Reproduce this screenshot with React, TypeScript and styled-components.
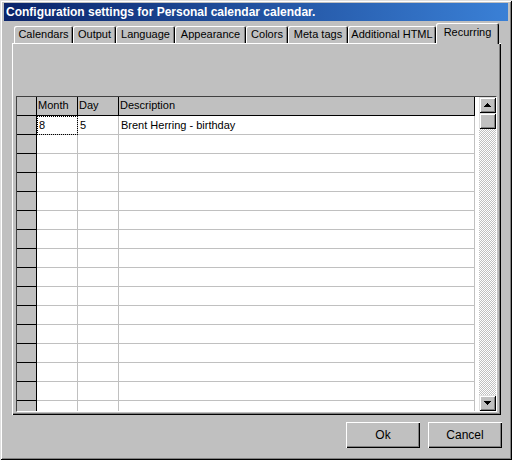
import React from 'react';
import styled, { createGlobalStyle } from 'styled-components';

const GlobalStyle = createGlobalStyle`
  * { box-sizing: border-box; }
  body {
    margin: 0;
    background: #c0c0c0;
    font-family: 'Liberation Sans', Arial, sans-serif;
    font-size: 11px;
    color: #000;
  }
`;

const Window = styled.div`
  width: 512px;
  height: 460px;
  padding: 3px 4px 0 4px;
  background: #c0c0c0;
  box-shadow: inset 1px 1px #dfdfdf, inset -1px -1px #000, inset 2px 2px #fff,
    inset -2px -2px #808080;
  display: flex;
  flex-direction: column;
`;

const TitleBar = styled.div`
  height: 18px;
  padding-left: 2px;
  display: flex;
  align-items: center;
  background: linear-gradient(to right, #0a246a, #3a80d6);
  color: #fff;
  font-weight: bold;
  font-size: 12px;
`;

const TabRow = styled.div`
  margin: 2px 0 0 10px;
  height: 20px;
  display: flex;
  align-items: flex-end;
`;

const Tab = styled.div<{ $width: number; $active?: boolean }>`
  position: relative;
  width: ${(p) => p.$width}px;
  height: ${(p) => (p.$active ? 21 : 17)}px;
  margin-bottom: ${(p) => (p.$active ? -1 : 0)}px;
  z-index: ${(p) => (p.$active ? 1 : 0)};
  padding-bottom: ${(p) => (p.$active ? 3 : 1)}px;
  display: flex;
  align-items: center;
  justify-content: center;
  background: #c0c0c0;
  border-radius: 2px 2px 0 0;
  box-shadow: inset 1px 1px #fff, inset -1px 0 #000, inset -2px 0 #808080;
  white-space: nowrap;
`;

const Panel = styled.div`
  width: 489px;
  height: 372px;
  margin-left: 8px;
  padding: 53px 0 0 4px;
  background: #c0c0c0;
  box-shadow: inset 1px 1px #fff, inset -1px -1px #000, inset -2px -2px #808080;
`;

const Grid = styled.div`
  width: 481px;
  height: 316px;
  display: flex;
  background: #fff;
  border-top: 1px solid #404040;
  border-left: 1px solid #404040;
  border-right: 1px solid #fff;
  border-bottom: 1px solid #fff;
`;

const Table = styled.div`
  flex: 1;
  overflow: hidden;
  display: flex;
  flex-direction: column;
`;

const Row = styled.div`
  height: 19px;
  flex: none;
  display: flex;
`;

const RowHead = styled.div`
  width: 20px;
  flex: none;
  background: #c0c0c0;
  border-right: 1px solid #000;
  border-bottom: 1px solid #000;
`;

const HeadCell = styled.div<{ $width: number }>`
  width: ${(p) => p.$width}px;
  flex: none;
  padding: 2px 0 0 1px;
  background: #c0c0c0;
  border-right: 1px solid #000;
  border-bottom: 1px solid #000;
  white-space: nowrap;
`;

const DataCell = styled.div<{ $width: number; $focus?: boolean }>`
  width: ${(p) => p.$width}px;
  flex: none;
  padding: 3px 0 0 2px;
  background: #fff;
  border-right: 1px solid #c0c0c0;
  border-bottom: 1px solid #c0c0c0;
  white-space: nowrap;
  outline: ${(p) => (p.$focus ? '1px dotted #000' : 'none')};
  outline-offset: -1px;
`;

const ScrollBar = styled.div`
  width: 17px;
  flex: none;
  display: flex;
  flex-direction: column;
  background: repeating-conic-gradient(#c0c0c0 0% 25%, #fff 0% 50%) 0 0 / 2px 2px;
`;

const ScrollPart = styled.div`
  height: 16px;
  flex: none;
  display: flex;
  align-items: center;
  justify-content: center;
  background: #c0c0c0;
  box-shadow: inset 1px 1px #dfdfdf, inset -1px -1px #000, inset 2px 2px #fff,
    inset -2px -2px #808080;
`;

const Track = styled.div`
  flex: 1;
`;

const Footer = styled.div`
  margin: 7px 6px 0 0;
  display: flex;
  justify-content: flex-end;
  gap: 8px;
`;

const Button = styled.button`
  width: 74px;
  height: 26px;
  padding: 0;
  border: none;
  background: #c0c0c0;
  font-family: 'Liberation Sans', Arial, sans-serif;
  font-size: 12px;
  color: #000;
  box-shadow: inset 1px 1px #fff, inset -1px -1px #000, inset -2px -2px #808080;
`;

const Arrow = ({ down }: { down?: boolean }) => (
  <svg width="7" height="4" viewBox="0 0 7 4" shapeRendering="crispEdges">
    <polygon points={down ? '0,0 7,0 3.5,4' : '3.5,0 7,4 0,4'} fill="#000" />
  </svg>
);

const tabs = [
  { label: 'Calendars', width: 59 },
  { label: 'Output', width: 43 },
  { label: 'Language', width: 59 },
  { label: 'Appearance', width: 71 },
  { label: 'Colors', width: 42 },
  { label: 'Meta tags', width: 60 },
  { label: 'Additional HTML', width: 88 },
  { label: 'Recurring', width: 63, active: true },
];

const columns = [
  { key: 'month', label: 'Month', width: 41 },
  { key: 'day', label: 'Day', width: 41 },
  { key: 'desc', label: 'Description', width: 356 },
] as const;

type Entry = { month: string; day: string; desc: string };

const entries: Entry[] = [{ month: '8', day: '5', desc: 'Brent Herring - birthday' }];

const ROWS = 16;

export default function App() {
  const rows: Entry[] = Array.from(
    { length: ROWS },
    (_, i) => entries[i] ?? { month: '', day: '', desc: '' }
  );

  return (
    <>
      <GlobalStyle />
      <Window>
        <TitleBar>Configuration settings for Personal calendar calendar.</TitleBar>
        <TabRow>
          {tabs.map((t) => (
            <Tab key={t.label} $width={t.width} $active={t.active}>
              {t.label}
            </Tab>
          ))}
        </TabRow>
        <Panel>
          <Grid>
            <Table>
              <Row>
                <RowHead />
                {columns.map((c) => (
                  <HeadCell key={c.key} $width={c.width}>
                    {c.label}
                  </HeadCell>
                ))}
              </Row>
              {rows.map((r, i) => (
                <Row key={i}>
                  <RowHead />
                  {columns.map((c, j) => (
                    <DataCell key={c.key} $width={c.width} $focus={i === 0 && j === 0}>
                      {r[c.key]}
                    </DataCell>
                  ))}
                </Row>
              ))}
            </Table>
            <ScrollBar>
              <ScrollPart>
                <Arrow />
              </ScrollPart>
              <ScrollPart />
              <Track />
              <ScrollPart>
                <Arrow down />
              </ScrollPart>
            </ScrollBar>
          </Grid>
        </Panel>
        <Footer>
          <Button>Ok</Button>
          <Button>Cancel</Button>
        </Footer>
      </Window>
    </>
  );
}
